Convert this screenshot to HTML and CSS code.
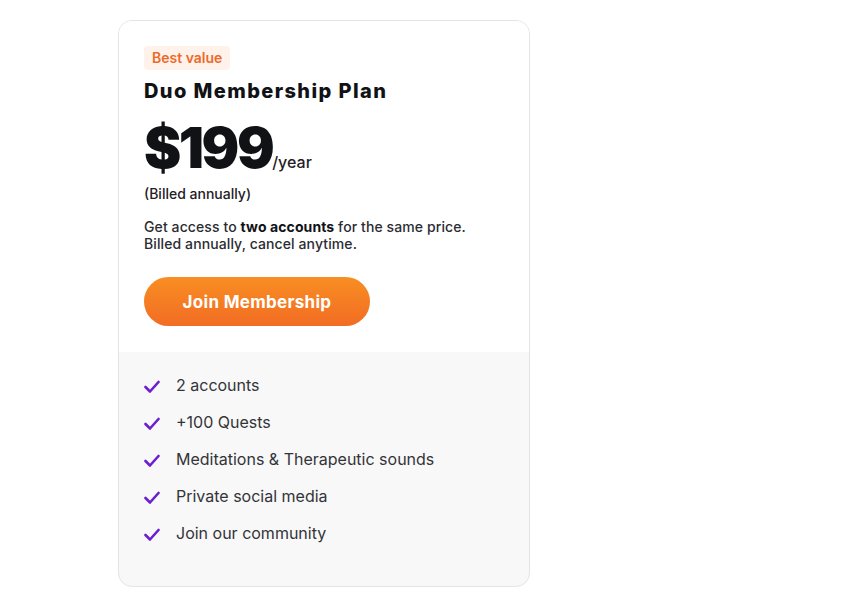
FILE: index.html
```html
<!DOCTYPE html>
<html lang="en">
<head>
    <meta charset="UTF-8">
    <meta name="viewport" content="width=device-width, initial-scale=1.0">
    <title>Duo Membership</title>
    <link rel="stylesheet" href="styles.css">
</head>
<body>

    <div class="plan-card">
        <!-- Plan header -->
        <div class="plan-top">
            <span class="badge">Best value</span>
            <h2 class="plan-name">Duo Membership Plan</h2>
            <div class="price"><span class="amount">$199</span><span class="period">/year</span></div>
            <p class="billed">(Billed annually)</p>
            <p class="desc">Get access to <strong>two accounts</strong> for the same price.<br>Billed annually, cancel anytime.</p>
            <button class="join-btn">Join Membership</button>
        </div>

        <!-- Features -->
        <ul class="features">
            <li><svg class="check" viewBox="0 0 16 14"><path d="M1.5 7 L6 11.5 L14.5 2"/></svg>2 accounts</li>
            <li><svg class="check" viewBox="0 0 16 14"><path d="M1.5 7 L6 11.5 L14.5 2"/></svg>+100 Quests</li>
            <li><svg class="check" viewBox="0 0 16 14"><path d="M1.5 7 L6 11.5 L14.5 2"/></svg>Meditations &amp; Therapeutic sounds</li>
            <li><svg class="check" viewBox="0 0 16 14"><path d="M1.5 7 L6 11.5 L14.5 2"/></svg>Private social media</li>
            <li><svg class="check" viewBox="0 0 16 14"><path d="M1.5 7 L6 11.5 L14.5 2"/></svg>Join our community</li>
        </ul>
    </div>

</body>
</html>
```

FILE: styles.css
```css
body {
    margin: 0;
    padding: 20px 0 0 118px;
    background-color: #ffffff;
    font-family: Inter, "Noto Sans", sans-serif;
    color: #1f2024;
}
.plan-card {
    width: 410px;
    height: 565px;
    border: 1px solid #e4e4e7;
    border-radius: 14px;
    overflow: hidden;
    display: flex;
    flex-direction: column;
    background-color: #f8f8f9;
}
.plan-top {
    background-color: #ffffff;
    padding: 25px 25px 26px 25px;
    display: flex;
    flex-direction: column;
    align-items: flex-start;
}
.badge {
    background-color: #fff2ea;
    color: #ec6a2c;
    font-size: 14px;
    font-weight: 600;
    padding: 3px 8px;
    line-height: 18px;
    border-radius: 4px;
}
.plan-name {
    margin: 9px 0 0 0;
    font-size: 20px;
    font-weight: 800;
    line-height: 24px;
    letter-spacing: 1.4px;
    color: #111216;
}
.price {
    margin-top: 18px;
    display: flex;
    align-items: baseline;
}
.amount {
    font-size: 56px;
    font-weight: 900;
    line-height: 54px;
    letter-spacing: -2.5px;
    color: #111216;
}
.period {
    font-size: 16px;
    font-weight: 500;
    line-height: 20px;
}
.billed {
    margin: 10px 0 0 0;
    font-size: 14px;
    font-weight: 500;
    line-height: 17px;
}
.desc {
    margin: 16px 0 0 0;
    font-size: 14px;
    font-weight: 500;
    line-height: 17px;
    letter-spacing: 0.1px;
    color: #2b2c31;
}
.desc strong {
    font-weight: 700;
    color: #111216;
}
.join-btn {
    margin-top: 25px;
    width: 226px;
    height: 49px;
    border: none;
    border-radius: 25px;
    background: linear-gradient(180deg, #f88e22 0%, #f26c24 100%);
    color: #ffffff;
    font-family: inherit;
    font-size: 17px;
    font-weight: 700;
    letter-spacing: 0.3px;
    cursor: pointer;
}
.features {
    list-style: none;
    margin: 0;
    padding: 23px 25px 0 25px;
    display: flex;
    flex-direction: column;
    gap: 17px;
}
.features li {
    display: flex;
    align-items: center;
    font-size: 16px;
    line-height: 20px;
    color: #333438;
}
.check {
    width: 16px;
    height: 14px;
    margin-right: 16px;
    margin-top: 4px;
    fill: none;
    stroke: #6c1fd1;
    stroke-width: 2.6;
    stroke-linecap: round;
    stroke-linejoin: round;
}
```
